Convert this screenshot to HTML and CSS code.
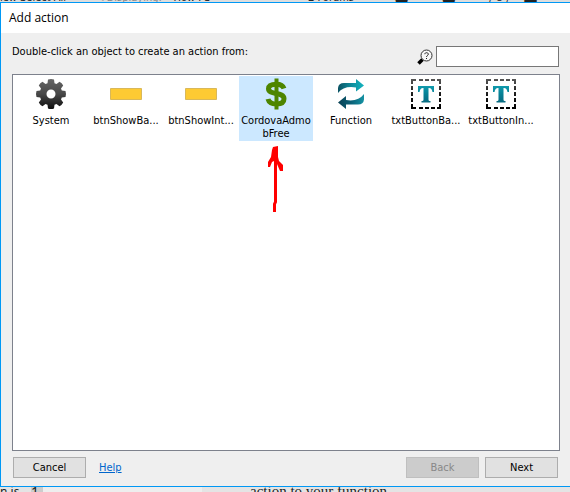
FILE: index.html
```html
<!DOCTYPE html>
<html lang="en">
<head>
<meta charset="utf-8">
<title>Add action</title>
<link rel="stylesheet" href="styles.css">
</head>
<body>
<svg class="defs" aria-hidden="true">
  <defs>
    <linearGradient id="dark" x1="0" y1="0" x2="0" y2="1"><stop offset="0" stop-color="#666"/><stop offset=".5" stop-color="#484848"/><stop offset="1" stop-color="#0c0c0c"/></linearGradient>
    <linearGradient id="teal" gradientUnits="userSpaceOnUse" x1="0" y1="1" x2="0" y2="31"><stop offset="0" stop-color="#16b0bf"/><stop offset=".5" stop-color="#078196"/><stop offset="1" stop-color="#07586f"/></linearGradient>
    <linearGradient id="right" x1="0" y1="0" x2="1" y2="0"><stop offset="0" stop-color="#0b5263"/><stop offset=".5" stop-color="#0e8b9b"/><stop offset="1" stop-color="#14b4c0"/></linearGradient>
    <linearGradient id="left" x1="0" y1="0" x2="1" y2="0"><stop offset="0" stop-color="#0a4154"/><stop offset=".5" stop-color="#0a6076"/><stop offset="1" stop-color="#1593a4"/></linearGradient>
    <linearGradient id="frame" gradientUnits="userSpaceOnUse" x1="0" y1="1" x2="0" y2="31"><stop offset="0" stop-color="#555"/><stop offset=".6" stop-color="#111"/><stop offset="1" stop-color="#000"/></linearGradient>
    <symbol id="text-object" viewBox="0 0 32 32">
      <path fill="url(#frame)" d="M1 1h5v2H3v3H1zM9 1h4v2H9zM15 1h4v2h-4zM21 1h4v2h-4zM27 1h4v5h-2V3h-2zM29 8h2v4h-2zM29 14h2v4h-2zM29 20h2v4h-2zM29 26h2v5h-4v-2h2zM21 29h4v2h-4zM15 29h4v2h-4zM9 29h4v2H9zM1 26h2v3h3v2H1zM1 20h2v4H1zM1 14h2v4H1zM1 8h2v4H1z"/>
      <path fill="url(#teal)" d="M8 8H24V14H22.500C22 11.200 21 10 19 10H18.500V21.500C18.500 22.800 19 23 20.500 23.100V24.500H11.500V23.100C13 23 13.500 22.800 13.500 21.500V10H13C11 10 10 11.200 9.500 14H8Z"/>
    </symbol>
  </defs>
</svg>

<div class="behind behind-top" aria-hidden="true">
  <span class="select">iew Select All</span><span class="faint">◂ Displaying:</span><span class="shown">How I S</span>
  <span class="forums">▪ Forums</span><span class="mark">●</span><span class="mark">●</span><span class="strokes">/ O /</span><span class="mark">■</span>
</div>

<main class="dialog">
  <header class="title">Add action</header>
  <div class="content">
    <div class="prompt">
      <p>Double-click an object to create an action from:</p>
      <label class="search">
        <svg width="16" height="16" viewBox="0 0 16 16" role="img" aria-label="Search">
          <path d="M1.500 14.500L5.500 10.500" stroke="#000" stroke-width="3.500"/>
          <circle cx="9.500" cy="6.500" r="5.500" fill="#f8f8f8" stroke="#333"/>
          <path d="M7.800 5.200C7.800 3.200 11.300 3.200 11.300 5.200C11.300 6.500 9.500 6.600 9.500 8M9.500 9V10" fill="none" stroke="#222"/>
        </svg>
        <input type="text">
      </label>
    </div>

    <ul class="objects">
      <li class="object">
        <svg class="icon" viewBox="0 0 32 32">
          <path fill="url(#dark)" fill-rule="evenodd" d="M13 1.500Q16 .5 19 1.500L19.500 5.200L21.500 6L24.500 3.800Q27 5 28.200 7.500L26 10.500L26.800 12.500L30.500 13Q31.500 16 30.500 19L26.800 19.500L26 21.500L28.200 24.500Q27 27 24.500 28.200L21.500 26L19.500 26.800L19 30.500Q16 31.500 13 30.500L12.500 26.800L10.500 26L7.500 28.200Q5 27 3.800 24.500L6 21.500L5.200 19.500L1.500 19Q.5 16 1.500 13L5.200 12.500L6 10.500L3.800 7.500Q5 5 7.500 3.800L10.500 6L12.500 5.200ZM16 11.500A4.500 4.500 0 1 0 16 20.500A4.500 4.500 0 1 0 16 11.500Z"/>
        </svg>
        <span>System</span>
      </li>
      <li class="object">
        <svg class="icon" viewBox="0 0 32 32"><path d="M.5 10.500H31.500V21.500H.5Z" fill="#fdca33" stroke="#d9b85a"/></svg>
        <span>btnShowBa...</span>
      </li>
      <li class="object">
        <svg class="icon" viewBox="0 0 32 32"><path d="M.5 10.500H31.500V21.500H.5Z" fill="#fdca33" stroke="#d9b85a"/></svg>
        <span>btnShowInt...</span>
      </li>
      <li class="object selected">
        <svg class="icon" viewBox="0 0 32 32">
          <path d="M24 10.500C22.800 7.200 20 6.200 16.500 6.200C11.500 6.200 8.500 7.800 8.500 10.800C8.500 17.500 24 13.500 24 20.800C24 24.500 21 26 16.500 26C12 26 9 25 8 21" fill="none" stroke="#4d8500" stroke-width="5"/>
          <path d="M16.500 .5V31.500" stroke="#4d8500" stroke-width="4"/>
        </svg>
        <span>CordovaAdmo<br>bFree</span>
      </li>
      <li class="object">
        <svg class="icon" viewBox="0 0 32 32">
          <path fill="url(#right)" d="M3 15V10Q3.500 5 9 5H21V1L29 7.500L21 13.500V9.500Q9 7.500 3 15Z"/>
          <path fill="url(#left)" d="M29 16V21.500Q28.500 26.500 23 26.500H11V31L3 24.500L11 18V22Q23 24 29 16Z"/>
        </svg>
        <span>Function</span>
      </li>
      <li class="object"><svg class="icon"><use href="#text-object"/></svg><span>txtButtonBa...</span></li>
      <li class="object"><svg class="icon"><use href="#text-object"/></svg><span>txtButtonIn...</span></li>
    </ul>

    <footer class="actions">
      <button type="button">Cancel</button>
      <a href="#help">Help</a>
      <button type="button" class="back" disabled>Back</button>
      <button type="button">Next</button>
    </footer>
  </div>
  <svg class="arrow" width="20" height="68" viewBox="0 0 20 68" aria-hidden="true">
    <path d="M9.500 66V58L10.500 56V12" fill="none" stroke="#f00" stroke-width="3"/>
    <path d="M8 1L13 0V11L14 15L18 19V25H15L12 18L9 15L7 16L5 21H3V16L6 11L7 4Z" fill="#f00"/>
  </svg>
</main>

<div class="behind behind-bottom" aria-hidden="true">
  <span class="edge">n is</span><span class="number">1</span><span class="dash">-</span><span class="page">action to your function</span>
</div>
</body>
</html>
```
FILE: styles.css
```css
* {
  box-sizing: border-box;
}

body {
  margin: 0;
  min-height: 100vh;
  display: flex;
  flex-direction: column;
  background: #e4e4e4;
  color: #000;
  font: 11px/13px "DejaVu Sans Condensed", "DejaVu Sans", sans-serif;
}

.defs {
  position: absolute;
  width: 0;
  height: 0;
}

.behind {
  display: flex;
  overflow: hidden;
  white-space: nowrap;
  color: #222;
}

.behind-top {
  height: 2px;
  align-items: flex-end;
  line-height: 8px;
  background: #dedede;
}

.select {
  width: 100px;
}

.faint {
  width: 76px;
  color: #888;
}

.shown {
  width: 136px;
}

.forums {
  width: 88px;
}

.mark {
  width: 48px;
  font-size: 18px;
}

.strokes {
  width: 34px;
}

.behind-bottom {
  height: 5px;
  font: 14px/10px "Noto Sans", sans-serif;
}

.edge {
  width: 31px;
  font-size: 12px;
}

.number {
  width: 12px;
  background: #ccc;
}

.dash {
  width: 159px;
  padding-left: 3px;
  background: #eee;
}

.page {
  flex: 1;
  padding-left: 48px;
  font: 15px/8px "Liberation Serif", serif;
}

.dialog {
  position: relative;
  flex: 1;
  display: flex;
  flex-direction: column;
  border: 1px solid #0098f5;
  border-right: 0;
  background: #efefef;
}

.title {
  padding: 6px 8px 7px;
  background: #fff;
  font: 12px/17px "Open Sans", sans-serif;
}

.content {
  flex: 1;
  display: flex;
  flex-direction: column;
  padding: 12px 10px 8px 11px;
}

.prompt {
  display: flex;
  justify-content: space-between;
  align-items: flex-start;
  margin-bottom: 7px;
}

.prompt p {
  margin: 0;
}

.search {
  display: flex;
  gap: 3px;
  align-items: center;
  padding-top: 1px;
}

.search input {
  width: 123px;
  height: 21px;
  margin-right: 1px;
  padding: 0 4px;
  border: 1px solid #777;
  background: #fff;
  font: inherit;
}

.objects {
  flex: 1;
  display: flex;
  flex-wrap: wrap;
  align-content: flex-start;
  gap: 1px;
  margin: 0;
  padding: 1px;
  list-style: none;
  background: #fff;
  border: 1px solid #7d818c;
}

.object {
  width: 74px;
  height: 65px;
  padding-top: 2px;
  display: flex;
  flex-direction: column;
  align-items: center;
  gap: 4px;
  text-align: center;
  white-space: nowrap;
}

.selected {
  background: #cce8ff;
}

.icon {
  width: 32px;
  height: 32px;
}

.actions {
  display: flex;
  align-items: center;
  gap: 6px;
  padding: 6px 2px 0 1px;
}

.actions button {
  width: 73px;
  height: 21px;
  padding: 0;
  border: 1px solid #adadad;
  background: #e1e1e1;
  color: #000;
  font: inherit;
}

.actions a {
  margin-left: 7px;
  color: #06c;
}

.actions .back {
  margin-left: auto;
  background: #ccc;
  border-color: #bfbfbf;
  color: #888;
}

.arrow {
  position: absolute;
  left: 264px;
  top: 143px;
}
```
